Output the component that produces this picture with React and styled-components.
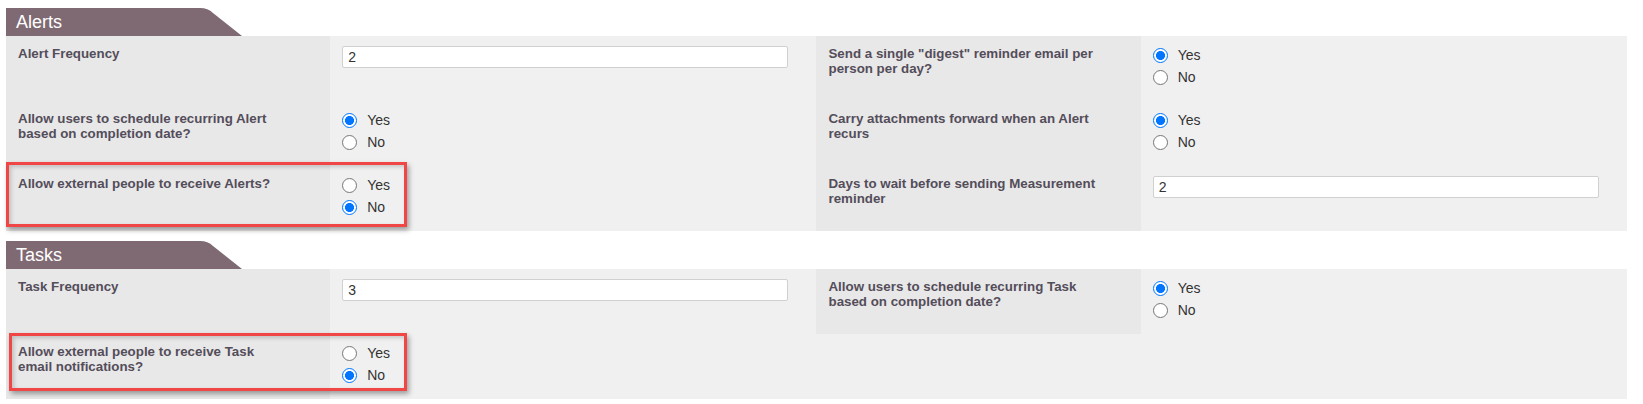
import React from 'react';
import styled, { createGlobalStyle } from 'styled-components';

const GlobalStyle = createGlobalStyle`
  html, body {
    margin: 0;
    padding: 0;
    background: #ffffff;
  }
  body {
    font-family: "Liberation Sans", Arial, sans-serif;
  }
`;

const Page = styled.div`
  padding: 8px 16px 0 6px;
`;

const Section = styled.section`
  margin-bottom: 10px;
`;

const Tab = styled.div`
  width: 236px;
  height: 28px;
  background: #7f6a73;
  color: #ffffff;
  font-size: 18px;
  line-height: 29px;
  padding-left: 10px;
  box-sizing: border-box;
  clip-path: path('M0 0 H194 Q202 0 207 5 L236 28 H0 Z');
`;

const Grid = styled.div`
  display: grid;
  grid-template-columns: 20% 30% 20% 30%;
  background: #f0f0f0;
`;

const LabelCell = styled.div`
  position: relative;
  background: #e8e8e8;
  padding: 10px 42px 10px 12px;
  min-height: 45px;
  font-size: 13.33px;
  line-height: 15px;
  font-weight: bold;
  color: #544d5a;
`;

const ValueCell = styled.div`
  padding: 8px 28px 13px 12px;
`;

const TextInput = styled.input`
  display: block;
  box-sizing: border-box;
  width: 100%;
  height: 22px;
  margin: 2px 0 0;
  padding: 0 5px;
  border: 1px solid #d0d0d0;
  border-radius: 2px;
  background: #ffffff;
  font-family: "Liberation Sans", Arial, sans-serif;
  font-size: 14px;
  color: #333333;
  outline: none;
`;

const Options = styled.div`
  display: flex;
  flex-direction: column;
`;

const Option = styled.label`
  display: flex;
  align-items: center;
  height: 22px;
  font-size: 14px;
  color: #333333;
`;

const Radio = styled.input.attrs({ type: 'radio' })`
  appearance: none;
  box-sizing: border-box;
  width: 15px;
  height: 15px;
  margin: 0 10px 0 0;
  border-radius: 50%;
  border: 1px solid #767676;
  background: #ffffff;

  &:checked {
    border: 1.5px solid #0075ff;
    background: radial-gradient(circle, #0075ff 0 4.2px, #ffffff 4.8px);
  }
`;

const Highlight = styled.div`
  position: absolute;
  top: ${p => p.$top}px;
  left: ${p => p.$left}px;
  width: ${p => p.$width}px;
  height: ${p => p.$height}px;
  box-sizing: border-box;
  border: 3px solid #f04646;
  box-shadow: 2px 3px 5px rgba(0, 0, 0, 0.35), inset 2px 2px 4px rgba(0, 0, 0, 0.18);
  pointer-events: none;
  z-index: 2;
`;

const YesNo = ({ name, value }) => (
  <Options>
    <Option>
      <Radio name={name} defaultChecked={value === 'yes'} />
      Yes
    </Option>
    <Option>
      <Radio name={name} defaultChecked={value === 'no'} />
      No
    </Option>
  </Options>
);

const App = () => {
  return (
    <>
      <GlobalStyle />
      <Page>
        <Section>
          <Tab>Alerts</Tab>
          <Grid>
            <LabelCell>Alert Frequency</LabelCell>
            <ValueCell>
              <TextInput type="text" defaultValue="2" />
            </ValueCell>
            <LabelCell>Send a single "digest" reminder email per person per day?</LabelCell>
            <ValueCell>
              <YesNo name="digest" value="yes" />
            </ValueCell>

            <LabelCell>Allow users to schedule recurring Alert based on completion date?</LabelCell>
            <ValueCell>
              <YesNo name="alertRecurring" value="yes" />
            </ValueCell>
            <LabelCell>Carry attachments forward when an Alert recurs</LabelCell>
            <ValueCell>
              <YesNo name="attachments" value="yes" />
            </ValueCell>

            <LabelCell>
              <Highlight $top={-4} $left={0} $width={401} $height={65} />
              Allow external people to receive Alerts?
            </LabelCell>
            <ValueCell>
              <YesNo name="alertExternal" value="no" />
            </ValueCell>
            <LabelCell>Days to wait before sending Measurement reminder</LabelCell>
            <ValueCell>
              <TextInput type="text" defaultValue="2" />
            </ValueCell>
          </Grid>
        </Section>

        <Section>
          <Tab>Tasks</Tab>
          <Grid>
            <LabelCell>Task Frequency</LabelCell>
            <ValueCell>
              <TextInput type="text" defaultValue="3" />
            </ValueCell>
            <LabelCell>Allow users to schedule recurring Task based on completion date?</LabelCell>
            <ValueCell>
              <YesNo name="taskRecurring" value="yes" />
            </ValueCell>

            <LabelCell>
              <Highlight $top={-1} $left={3} $width={398} $height={58} />
              Allow external people to receive Task email notifications?
            </LabelCell>
            <ValueCell>
              <YesNo name="taskExternal" value="no" />
            </ValueCell>
          </Grid>
        </Section>
      </Page>
    </>
  );
};

export default App;
